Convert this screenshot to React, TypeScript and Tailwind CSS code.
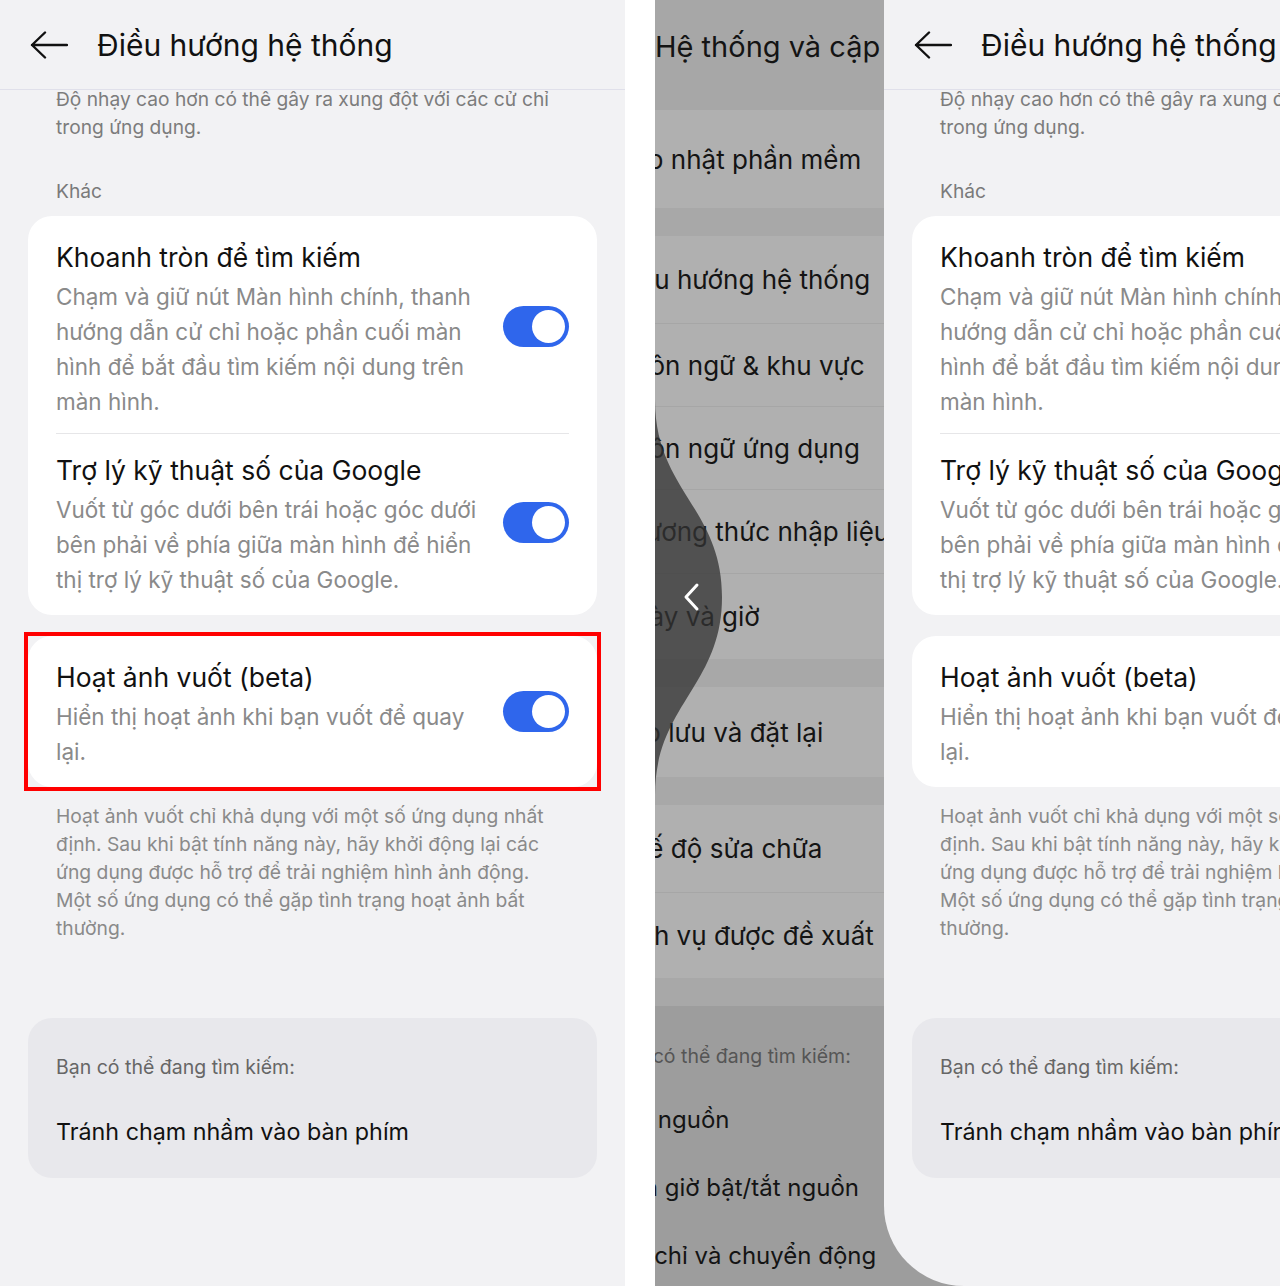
import React from 'react';

const Toggle: React.FC = () => (
  <div className="w-[66px] h-[41px] -mt-[6px] rounded-full bg-[#2f66ec] flex items-center justify-end p-[4px] shrink-0">
    <div className="w-[33px] h-[33px] rounded-full bg-white" />
  </div>
);

const Lines: React.FC<{ lines: string[]; className: string }> = ({ lines, className }) => (
  <div className={className}>
    {lines.map((l, i) => (
      <span key={i} className="block whitespace-nowrap">{l}</span>
    ))}
  </div>
);

const SettingItem: React.FC<{ title: string; desc: string[]; className: string }> = ({ title, desc, className }) => (
  <div className={`flex items-center ${className}`}>
    <div className="flex-1">
      <p className="text-[26.5px] leading-[34px] text-[#111] whitespace-nowrap">{title}</p>
      <Lines lines={desc} className="mt-[5px] text-[22.5px] leading-[35px] text-[#8a8a8a]" />
    </div>
    <Toggle />
  </div>
);

const SettingsScreen: React.FC<{ highlight?: boolean }> = ({ highlight }) => (
  <div className="w-[625px] shrink-0 flex flex-col">
    <header className="h-[90px] flex items-center border-b border-[#e0e0ea] shrink-0">
      <svg className="ml-[30px]" width="38" height="28" viewBox="0 0 38 28" fill="none">
        <path d="M37 14H2M15 1.5L2 14l13 12.5" stroke="#111" strokeWidth="2.4" strokeLinecap="round" strokeLinejoin="round" />
      </svg>
      <h1 className="ml-[29px] text-[30px] leading-[40px] text-[#111] whitespace-nowrap">Điều hướng hệ thống</h1>
    </header>

    <Lines
      lines={['Độ nhạy cao hơn có thê gây ra xung đột với các cử chỉ', 'trong ứng dụng.']}
      className="-mt-[5px] px-[56px] text-[19.2px] leading-[28px] text-[#7c7c7c]"
    />

    <p className="mt-[36px] px-[56px] text-[19.2px] leading-[28px] text-[#7a7a7a]">Khác</p>

    <div className="mt-[11px] mx-[28px] rounded-[24px] bg-white px-[28px]">
      <SettingItem
        className="pt-[24px] pb-[14px]"
        title="Khoanh tròn để tìm kiếm"
        desc={[
          'Chạm và giữ nút Màn hình chính, thanh',
          'hướng dẫn cử chỉ hoặc phần cuối màn',
          'hình để bắt đầu tìm kiếm nội dung trên',
          'màn hình.',
        ]}
      />
      <div className="h-px bg-[#e6e6e8]" />
      <SettingItem
        className="pt-[19px] pb-[18px]"
        title="Trợ lý kỹ thuật số của Google"
        desc={[
          'Vuốt từ góc dưới bên trái hoặc góc dưới',
          'bên phải về phía giữa màn hình để hiển',
          'thị trợ lý kỹ thuật số của Google.',
        ]}
      />
    </div>

    <div className={`mt-[17px] mx-[24px] border-4 ${highlight ? 'border-[#ff0000]' : 'border-transparent'}`}>
      <div className="rounded-[24px] bg-white px-[28px]">
        <SettingItem
          className="pt-[24px] pb-[18px]"
          title="Hoạt ảnh vuốt (beta)"
          desc={['Hiển thị hoạt ảnh khi bạn vuốt để quay', 'lại.']}
        />
      </div>
    </div>

    <Lines
      lines={[
        'Hoạt ảnh vuốt chỉ khả dụng với một số ứng dụng nhất',
        'định. Sau khi bật tính năng này, hãy khởi động lại các',
        'ứng dụng được hỗ trợ để trải nghiệm hình ảnh động.',
        'Một số ứng dụng có thể gặp tình trạng hoạt ảnh bất',
        'thường.',
      ]}
      className="mt-[11px] px-[56px] text-[19.3px] leading-[28px] text-[#8a8a8a]"
    />

    <div className="mt-[76px] mx-[28px] rounded-[24px] bg-[#e8e8ec] px-[28px] pt-[35px] pb-[29px]">
      <p className="text-[19.5px] leading-[28px] text-[#666] whitespace-nowrap">Bạn có thể đang tìm kiếm:</p>
      <p className="mt-[34px] text-[23.3px] leading-[34px] text-[#111] whitespace-nowrap">Tránh chạm nhầm vào bàn phím</p>
    </div>
  </div>
);

const PrevRow: React.FC<{ label: string; h: string; divider?: boolean }> = ({ label, h, divider }) => (
  <div className={`${h} flex items-center bg-[#b0b0b0] ${divider ? 'border-t border-[#a6a6a6]' : ''}`}>
    <span className="ml-[-41px] text-[26px] text-[#141414] whitespace-nowrap">{label}</span>
  </div>
);

const Gap: React.FC = () => <div className="h-[28px] bg-[#a8a8a8]" />;

const PrevScreen: React.FC = () => (
  <div className="w-[229px] shrink-0 flex flex-col overflow-hidden">
    <div className="h-[110px] bg-[#a7a7a7] pt-[27px]">
      <span className="block text-[29px] leading-[40px] text-[#141414] whitespace-nowrap">Hệ thống và cập nhật</span>
    </div>
    <PrevRow h="h-[98px]" label="Cập nhật phần mềm" />
    <Gap />
    <PrevRow h="h-[87px]" label="Điều hướng hệ thống" />
    <PrevRow h="h-[83px]" label="Ngôn ngữ & khu vực" divider />
    <PrevRow h="h-[83px]" label="Ngôn ngữ ứng dụng" divider />
    <PrevRow h="h-[84px]" label="Phương thức nhập liệu" divider />
    <PrevRow h="h-[86px]" label="Ngày và giờ" divider />
    <Gap />
    <PrevRow h="h-[90px]" label="Sao lưu và đặt lại" />
    <Gap />
    <PrevRow h="h-[87px]" label="Chế độ sửa chữa" />
    <PrevRow h="h-[86px]" label="Dịch vụ được đề xuất" divider />
    <Gap />
    <div className="flex-1 bg-[#9d9d9d] pt-[36px] ml-[-43px]">
      <p className="text-[19.5px] leading-[28px] text-[#555] whitespace-nowrap">Bạn có thể đang tìm kiếm:</p>
      <p className="mt-[33px] ml-[4px] text-[24px] leading-[34px] text-[#141414] whitespace-nowrap">Tắt nguồn</p>
      <p className="mt-[34px] text-[24px] leading-[34px] text-[#141414] whitespace-nowrap">Hẹn giờ bật/tắt nguồn</p>
      <p className="mt-[34px] ml-[3px] text-[24px] leading-[34px] text-[#141414] whitespace-nowrap">Cử chỉ và chuyển động</p>
    </div>
  </div>
);

const App: React.FC = () => {
  return (
    <div className="flex w-[1280px] h-[1286px] overflow-hidden bg-white font-['Inter','Noto_Sans',sans-serif]">
      <div className="w-[625px] h-full bg-[#f2f2f4] overflow-hidden">
        <SettingsScreen highlight />
      </div>
      <div className="w-[30px] h-full bg-white" />
      <div className="relative flex flex-1 h-full bg-[#9d9d9d] overflow-hidden">
        <PrevScreen />
        <div className="flex-1 h-full bg-[#f2f2f4] rounded-bl-[80px] overflow-hidden">
          <SettingsScreen />
        </div>
        <svg className="absolute left-0 top-[400px]" width="72" height="395" viewBox="0 0 72 395">
          <path d="M0 0C0 90 67 108 67 197C67 286 0 305 0 395Z" fill="#333" fillOpacity="0.76" />
          <path d="M42 185L31 197L42 209" stroke="#fff" strokeWidth="3" fill="none" strokeLinecap="round" strokeLinejoin="round" />
        </svg>
      </div>
    </div>
  );
};

export default App;
